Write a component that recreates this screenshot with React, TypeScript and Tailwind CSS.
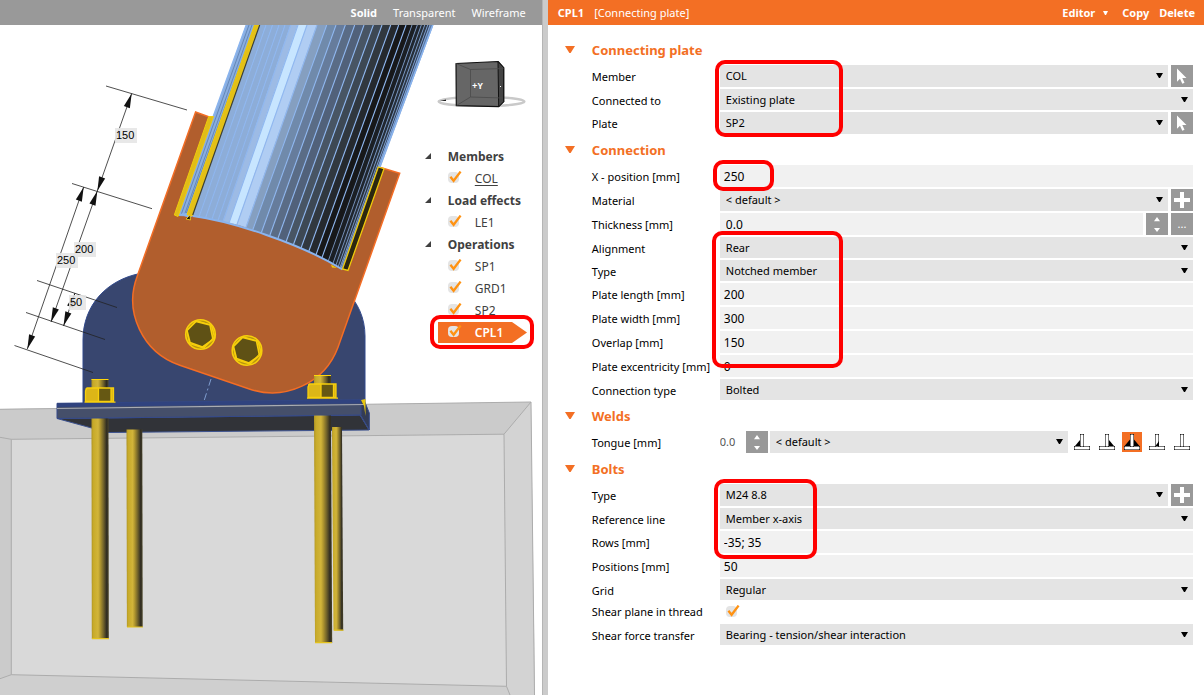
import { useId } from 'react'
import type { ReactNode } from 'react'
import clsx from 'clsx'

/* ---------- small shared pieces ---------- */

function Caret({ className }: { className?: string }) {
  return (
    <svg viewBox="0 0 7 5" className={clsx('h-[5px] w-[7px]', className)} fill="currentColor" aria-hidden="true">
      <path d="M0 0h7L4 5H3z" />
    </svg>
  )
}

function Highlight({ className }: { className: string }) {
  return <div className={clsx('pointer-events-none absolute z-10 rounded-[10px] border-4 border-[#ff0000]', className)} />
}

function Tick({ label, id }: { label?: string; id?: string }) {
  return (
    <span className="relative block h-3 w-3.5 shrink-0">
      <input
        id={id}
        type="checkbox"
        defaultChecked
        aria-label={label}
        className="block h-[11px] w-[11px] appearance-none rounded-sm bg-[#e4e4e4]"
      />
      <svg viewBox="0 0 14 12" className="pointer-events-none absolute -top-px left-0 h-3 w-3.5" aria-hidden="true">
        <path d="M2.4 5.8L5.6 9.8 12.6 .6" fill="none" stroke="#ff9212" strokeWidth="2.3" />
      </svg>
    </span>
  )
}

function Select({ id, value, tall }: { id: string; value: string; tall?: boolean }) {
  return (
    <div className="relative min-w-0 flex-1">
      <select
        id={id}
        defaultValue={value}
        className={clsx('block w-full appearance-none bg-[#e4e4e4] pr-5 pl-1.5', tall ? 'h-[22px]' : 'h-[21px]')}
      >
        <option value={value}>{value}</option>
      </select>
      <Caret className="pointer-events-none absolute top-2 right-[5px]" />
    </div>
  )
}

function GreyButton({ label, children }: { label: string; children: ReactNode }) {
  return (
    <button type="button" aria-label={label} className="flex h-[22px] w-[22px] shrink-0 items-center justify-center bg-[#999999] text-white">
      {children}
    </button>
  )
}

function PickButton() {
  return (
    <GreyButton label="Pick in scene">
      <svg viewBox="0 0 22 22" className="h-[22px] w-[22px]" fill="currentColor">
        <path d="M6 3.5v13.2l3-2.9 2.3 5 2.2-1-2.2-4.8h4.2z" />
      </svg>
    </GreyButton>
  )
}

function AddButton() {
  return (
    <GreyButton label="Add">
      <svg viewBox="0 0 22 22" className="h-[22px] w-[22px]" fill="currentColor">
        <path d="M9 3h4v6h6v4h-6v6H9v-6H3V9h6z" />
      </svg>
    </GreyButton>
  )
}

function SpinButton() {
  return (
    <GreyButton label="Step value">
      <svg viewBox="0 0 22 22" className="h-[22px] w-[22px]" fill="currentColor">
        <path d="M8 8.2L11 4l3 4.2zM8 15h6l-3 4z" />
      </svg>
    </GreyButton>
  )
}

/* ---------- property rows ---------- */

function Row({ label, id, children }: { label: string; id: string; children: ReactNode }) {
  return (
    <div className="flex items-center">
      <label htmlFor={id} className="w-32 shrink-0 pt-0.5 whitespace-nowrap">
        {label}
      </label>
      {children}
    </div>
  )
}

function SelectRow({ label, value, action }: { label: string; value: string; action?: ReactNode }) {
  const id = useId()
  return (
    <Row label={label} id={id}>
      <div className="flex min-w-0 flex-1 gap-[3px]">
        <Select id={id} value={value} tall={!!action} />
        {action}
      </div>
    </Row>
  )
}

function InputRow({ label, value, action }: { label: string; value: string; action?: ReactNode }) {
  const id = useId()
  return (
    <Row label={label} id={id}>
      <div className="flex min-w-0 flex-1 gap-[3px]">
        <input
          id={id}
          type="text"
          defaultValue={value}
          className={clsx('h-[22px] min-w-0 flex-1 bg-[#f1f1f1] text-[12px]', action ? 'pl-1.5' : 'pl-1')}
        />
        {action}
      </div>
    </Row>
  )
}

function Section({ title, children }: { title: string; children: ReactNode }) {
  return (
    <section>
      <button type="button" className="flex h-[31px] w-full items-center pl-[17px] text-left text-[13px] font-bold text-[#f36f24]">
        <svg viewBox="0 0 10 7" className="mr-[17px] h-[7px] w-2.5" fill="currentColor" aria-hidden="true">
          <path d="M0 0h10L5.6 7H4.4z" />
        </svg>
        {title}
      </button>
      <div className="flex flex-col gap-0.5 pr-[11px] pl-11">{children}</div>
    </section>
  )
}

/* ---------- weld type icons ---------- */

const WELDS = [
  { name: 'Fillet left', fill: 'M8 8v6H3z' },
  { name: 'Fillet right', fill: 'M12 8v6h5z' },
  { name: 'Fillet both sides', fill: 'M8 7.500v6.500H2.500zM12 7.500v6.500h5.500z' },
  { name: 'Butt', fill: 'M8.500 14L12 9v5z' },
  { name: 'None', fill: '' },
]

function WeldIcon({ fill }: { fill: string }) {
  return (
    <svg viewBox="0 0 20 20" className="h-5 w-5">
      <rect x="2.5" y="14.5" width="15" height="3" fill="#fff" stroke="#777" />
      <rect x="8.5" y="2.5" width="3" height="12" fill="#fff" stroke="#777" />
      <path d={fill} fill="#000" />
      <path d="M2 14h1v1H2zM17 14h1v1h-1zM2 17h1v1H2zM17 17h1v1h-1zM8 2h1v1H8zM11 2h1v1h-1zM8 14h1v1H8zM11 14h1v1h-1z" fill="#222" />
    </svg>
  )
}

/* ---------- 3D scene ---------- */

// facets of the tube: x at the top edge, then the lower end, then shade
const FACETS: [number, number, number, string][] = [
  [259.3, 192.5, 216, '#8dadd8'],
  [266, 199, 217, '#8dadd8'],
  [272.5, 205.5, 218, '#8dadd8'],
  [279, 212, 219, '#8dadd8'],
  [285, 218, 220.5, '#8dadd8'],
  [290.7, 223, 221.5, '#9dbbe5'],
  [298, 229, 223, '#c7e5ff'],
  [307, 237, 224.5, '#b0cdf3'],
  [317, 246, 227.5, '#859fc0'],
  [326.7, 252.7, 230, '#708aab'],
  [336, 261.3, 232.8, '#667c9c'],
  [345.3, 269.7, 235.8, '#5a6c86'],
  [354.7, 277.7, 239, '#51617a'],
  [364, 286, 242, '#485564'],
  [373.3, 293.3, 245, '#3d4854'],
  [382, 301, 248, '#31383f'],
  [390.7, 308.7, 251.5, '#25292e'],
  [398.7, 316, 254.7, '#17181a'],
  [406, 322, 257.5, '#17181a'],
  [412, 328.3, 260.8, '#1b1f24'],
  [417.3, 333, 263.2, '#20262e'],
  [421.3, 336, 265, '#262e38'],
  [424.7, 338.3, 266.3, '#2d3744'],
  [427.7, 340, 267.4, '#34425a'],
  [430, 341, 268, '#5d7ba6'],
  [433, 342.3, 269, '#8ab4ee'],
]

const EXTENSIONS = ['M106 86L187 110', 'M72 183.5L152 208.7', 'M37 280.5L117 307.5', 'M26 312.5L105 339.5', 'M14.5 345.5L93 372.5']
const SPANS = ['M131.7 93.5L97.3 191', 'M83.7 187L27.3 349', 'M97.3 191L51 322', 'M75 293L63.5 326']

const ARROWS = [
  { x: 131.7, y: 93.5, angle: 19.5 },
  { x: 97.3, y: 191, angle: 199.5 },
  { x: 97.3, y: 191, angle: 19.5 },
  { x: 83.7, y: 187, angle: 19.5 },
  { x: 27.3, y: 349, angle: 199.5 },
  { x: 51, y: 322, angle: 199.5 },
  { x: 63.5, y: 326, angle: 199.5 },
  { x: 75, y: 293, angle: 19.5 },
]

const DIMENSIONS = [
  { x: 115, y: 128, w: 22, text: '150' },
  { x: 74, y: 242, w: 22, text: '200' },
  { x: 56, y: 253, w: 22, text: '250' },
  { x: 69, y: 295, w: 17, text: '50' },
]

function AnchorNut({ x, y }: { x: number; y: number }) {
  return (
    <g transform={`translate(${x} ${y})`}>
      <rect x="6" y="0" width="17" height="9" fill="url(#rod)" />
      <path d="M6 .5h17" stroke="#ffd60a" />
      <path d="M0 9h28v14H0z" fill="#dcb617" />
      <path d="M13 9h12.5v14H13z" fill="#665813" />
      <path d="M1.5 9H28v13.5H0V12zM13 9v13M25.5 9v13M-1 23.2h31" fill="none" stroke="#f7cf0c" strokeWidth="1.3" />
    </g>
  )
}

function PlateBolt({ x, y }: { x: number; y: number }) {
  return (
    <g transform={`translate(${x} ${y})`} stroke="#f7cf0c" fill="none">
      <circle r="14.8" fill="#b8960f" strokeWidth="1.6" />
      <path d="M-13.5 -4L-4 -13.8 11 -9 14 3 3 13.5 -11 9z" strokeWidth="1.2" />
      <path d="M-4.5 -13L9.5 -9.5 12.5 5 2 12.5 -10.5 8 -13.5 -4z" fill="#5f5115" strokeWidth="1.6" />
      <path d="M12 -7.5l2 9L3 13.8" />
    </g>
  )
}

function Scene() {
  return (
    <svg viewBox="0 25 542 670" preserveAspectRatio="xMinYMin slice" className="absolute inset-0 h-full w-full" role="img" aria-label="Connection model">
      <defs>
        <linearGradient id="rod">
          <stop offset="0" stopColor="#b09524" />
          <stop offset=".12" stopColor="#c8ab2a" />
          <stop offset=".38" stopColor="#d2b53a" />
          <stop offset=".5" stopColor="#b2982f" />
          <stop offset=".7" stopColor="#6f612a" />
          <stop offset=".88" stopColor="#2e2b22" />
          <stop offset="1" stopColor="#4d4729" />
        </linearGradient>
      </defs>

      {/* concrete block */}
      <path d="M0 409L531 402 534.500 695H0z" fill="#cbcbcb" />
      <path d="M504 434L531 402 535 695H510L506.500 686z" fill="#d3d3d3" />
      <path d="M0 678L11.300 674.700 506.500 686 510 695H0z" fill="#cfcfcf" />
      <path d="M11.300 439.300L504 434.200 506.500 686.300 11.300 674.700z" fill="#d9d9d9" />
      <g fill="none" stroke="#acacac">
        <path d="M0 409.300L531 402 534.500 695M531 402L504 434.200" />
        <path d="M0 437.300L11.300 439.300 504 434.200 506.500 686.300 11.300 674.700V439.300M0 678.700L11.300 674.700M506.500 686.300L510 695" />
      </g>

      {/* stiffening plate on the base */}
      <path d="M83 404V340C83 305 107 280 140 273.500H300C336 273 365 300 365 336V404z" fill="#38466f" stroke="#31498c" />
      <path d="M211 379L204 401" stroke="#7f9dcf" strokeDasharray="7 3 2 3" />

      {/* base plate */}
      <path d="M57 418.500L108 432.500 369 430 360 415z" fill="#313338" stroke="#3c5290" />
      <path d="M360 399.500L364 400 369.300 413V430L360.500 415z" fill="#333c56" stroke="#34498a" />
      <path d="M57 403.300L361 399.800V415L57 418.500z" fill="#454f6a" stroke="#34498a" />
      <path d="M57 403.300L361 399.700V403.500L57 407z" fill="#30437f" />
      <path d="M57 408.500L365 404.500" stroke="#a9acb3" strokeWidth="1.200" />
      <path d="M361 400l4.500-1v17l-1.500-10z" fill="#e8c60f" />

      {/* anchors */}
      <path d="M332 427h10l1.200 203.500h-9.700z" fill="url(#rod)" />
      <path d="M126.500 429.500h15.800l.4 197.500h-15.800z" fill="url(#rod)" />
      <path d="M91.500 418.500h17l.3 220.500h-17z" fill="url(#rod)" />
      <path d="M314 415.500h17l1.200 227.500h-17.200z" fill="url(#rod)" />
      <path d="M92 638.700h17M127 627h16M315 642.700h17M334 630.200h9.500" stroke="#e3c21c" strokeWidth="1.200" />

      {/* connecting plate */}
      <path
        d="M195.600 112L137.300 275.900A70 69 0 0 0 179.800 365.300L248.600 388.700A70 69 0 0 0 338 347.300L399.700 173.300 378 166.700 300 150z"
        fill="#b15e2d"
        stroke="#f36d25"
        strokeWidth="1.500"
      />

      {/* tube */}
      <path d="M246 25H260L193 216.500 177.500 216z" fill="#8aaee0" />
      <path d="M249 25L181 215M252 25L184 216M255 25L186 214" stroke="#5a7dac" strokeWidth=".8" />
      {FACETS.slice(0, -1).map(([top, x, y, shade], i) => {
        const [nextTop, nextX, nextY] = FACETS[i + 1]
        return <path key={top} d={`M${top} 25H${nextTop}L${nextX} ${nextY}L${x} ${y}z`} fill={shade} stroke={shade} strokeWidth=".4" />
      })}
      {FACETS.slice(1).map(([top, x, y]) => (
        <path key={top} d={`M${top} 25L${x} ${y}`} stroke="#8fb7f0" strokeWidth={top > 410 ? '.7' : '1.1'} />
      ))}
      <path d="M193 216C230 221 300 243 342.500 269.500" fill="none" stroke="#8ab4ee" strokeWidth="2" />
      <path d="M246.300 25L178 214M432.700 25L379 168" stroke="#8ab4ee" strokeWidth="1.500" />
      <path d="M178 214l12 4 3-3-6-2z" fill="#8ab4ee" />

      {/* slots and welds */}
      <path d="M208.700 116.500H213.500L178 216.500 174.300 215z" fill="#e0bd18" stroke="#f0cb0b" />
      <path d="M254.500 25H259L192 216 187 214.500z" fill="#e3c018" stroke="#f0cb0b" />
      <path d="M259.700 25L192.700 215" stroke="#3c3f35" strokeWidth="1.200" />
      <path d="M186 219l4-4 .5 5z" fill="#111" stroke="#e3c018" />
      <path d="M378.300 167L384 168.700 348 270.500 342.500 269z" fill="#2b2710" stroke="#f0cb0b" strokeWidth="1.300" />
      <path d="M331 264.500l6 3.500-5-.5z" fill="#f0cb0b" />

      <PlateBolt x={200.5} y={334.5} />
      <PlateBolt x={247} y={350.5} />
      <AnchorNut x={85.5} y={379} />
      <AnchorNut x={308} y={375} />

      {/* dimension lines */}
      <g fill="none" stroke="#222" strokeWidth=".8">
        {EXTENSIONS.map((d) => (
          <path key={d} d={d} />
        ))}
        {SPANS.map((d) => (
          <path key={d} d={d} />
        ))}
      </g>
      {ARROWS.map((a) => (
        <path key={`${a.x}-${a.angle}`} d="M0 0L3.200 14.500H-3.200z" fill="#111" transform={`translate(${a.x} ${a.y}) rotate(${a.angle})`} />
      ))}
      {DIMENSIONS.map((d) => (
        <g key={d.text}>
          <rect x={d.x} y={d.y} width={d.w} height="15" fill="#e6e6e6" fillOpacity=".9" />
          <text x={d.x + 1} y={d.y + 11} className="font-['Liberation_Sans',sans-serif] text-[11px]">
            {d.text}
          </text>
        </g>
      ))}

      {/* view cube */}
      <ellipse cx="481.500" cy="101.500" rx="43" ry="4.500" fill="none" stroke="#c9c9c9" strokeWidth="2.200" />
      <path d="M440 101l6-1.500v1.500z" fill="#222" />
      <path d="M456 63.500L498 61.500 503.700 67.700V101.700L498.700 106.700 456.300 105.700z" fill="#666" stroke="#111" strokeWidth="1.200" strokeLinejoin="round" />
      <path d="M498 61.500L503.700 67.700V101.700L498.700 106.700z" fill="#444" stroke="#111" />
      <path d="M456 63.500L470.500 69.500 503.500 68.500M470.500 69.500V97L456.500 105.500M470.500 97L503 98" fill="none" stroke="#4a4a4a" strokeWidth=".8" />
      <rect x="500" y="86" width="1" height="1" fill="#fff" />
      <text x="472" y="89" fill="#fff" className="font-['Liberation_Mono',monospace] text-[9px] font-bold">
        +Y
      </text>
    </svg>
  )
}

/* ---------- model tree ---------- */

const TREE = [
  { title: 'Members', items: ['COL'] },
  { title: 'Load effects', items: ['LE1'] },
  { title: 'Operations', items: ['SP1', 'GRD1', 'SP2', 'CPL1'] },
]

function Tree() {
  return (
    <nav className="absolute top-[120px] right-2 w-[109px] text-[12px] text-[#404040]">
      {TREE.map((group) => (
        <div key={group.title}>
          <button type="button" className="flex h-[22px] items-center font-bold whitespace-nowrap">
            <svg viewBox="0 0 6 6" className="mr-[17px] h-1.5 w-1.5" fill="currentColor" aria-hidden="true">
              <path d="M6 0v6H0z" />
            </svg>
            <span className="pt-0.5">{group.title}</span>
          </button>
          {group.items.map((item) => {
            const selected = item === 'CPL1'
            return (
              <div key={item} className="relative flex h-[22px] items-center pl-[13px]">
                {selected && (
                  <svg viewBox="0 0 90 21" className="absolute left-[13px] h-[21px] w-[90px]" aria-hidden="true">
                    <path d="M0 0H74L89 10.500 74 21H0z" fill="#f36f24" />
                  </svg>
                )}
                <div className="relative flex items-center gap-[13px] pl-2.5">
                  <Tick label={item} />
                  <a
                    href={`#${item}`}
                    className={clsx('pt-0.5', item === 'COL' && 'underline underline-offset-2', selected && 'font-semibold text-white')}
                  >
                    {item}
                  </a>
                </div>
                {selected && <Highlight className="right-0 -top-1.5 -bottom-1.5 left-[5px]" />}
              </div>
            )
          })}
        </div>
      ))}
    </nav>
  )
}

/* ---------- property panel ---------- */

function Properties() {
  const tongueId = useId()
  const shearId = useId()

  return (
    <div className="min-w-0 flex-1 bg-white">
      <header className="flex h-[25px] items-center bg-[#f36f24] pr-[9px] pl-2.5 text-white">
        <h1 className="font-bold">CPL1</h1>
        <span className="ml-2.5">[Connecting plate]</span>
        <div className="ml-auto flex items-center font-bold">
          <button type="button" className="flex items-center gap-2">
            Editor
            <svg viewBox="0 0 5 4" className="h-1 w-[5px]" fill="currentColor" aria-hidden="true">
              <path d="M0 0h5L3 4H2z" />
            </svg>
          </button>
          <button type="button" className="ml-3.5">Copy</button>
          <button type="button" className="ml-2.5">Delete</button>
        </div>
      </header>

      <div className="pt-[9px]">
        <Section title="Connecting plate">
          <div className="relative flex flex-col gap-0.5">
            <SelectRow label="Member" value="COL" action={<PickButton />} />
            <SelectRow label="Connected to" value="Existing plate" />
            <SelectRow label="Plate" value="SP2" action={<PickButton />} />
            <Highlight className="-top-[5px] -bottom-[3px] left-[123px] w-32" />
          </div>
        </Section>

        <Section title="Connection">
          <div className="relative">
            <InputRow label="X - position [mm]" value="250" />
            <Highlight className="-top-[5px] -bottom-1 left-[121px] w-[61px]" />
          </div>
          <SelectRow label="Material" value="< default >" action={<AddButton />} />
          <InputRow
            label="Thickness [mm]"
            value="0.0"
            action={
              <>
                <SpinButton />
                <GreyButton label="More">...</GreyButton>
              </>
            }
          />
          <div className="relative flex flex-col gap-0.5">
            <SelectRow label="Alignment" value="Rear" />
            <SelectRow label="Type" value="Notched member" />
            <InputRow label="Plate length [mm]" value="200" />
            <InputRow label="Plate width [mm]" value="300" />
            <InputRow label="Overlap [mm]" value="150" />
            <Highlight className="-top-1.5 -bottom-[15px] left-[120px] w-[131px]" />
          </div>
          <InputRow label="Plate excentricity [mm]" value="0" />
          <SelectRow label="Connection type" value="Bolted" />
        </Section>

        <Section title="Welds">
          <Row label="Tongue [mm]" id={tongueId}>
            <input type="text" aria-label="Weld size" defaultValue="0.0" className="mr-[3px] w-[23px] text-[#555]" />
            <SpinButton />
            <div className="ml-0.5 flex min-w-0 flex-1">
              <Select id={tongueId} value="< default >" tall />
            </div>
            <div className="mr-px ml-1 flex gap-[5px]">
              {WELDS.map((weld) => (
                <button
                  key={weld.name}
                  type="button"
                  aria-label={weld.name}
                  className={clsx('h-5 w-5', weld.name === 'Fillet both sides' && 'bg-[#f36f24]')}
                >
                  <WeldIcon fill={weld.fill} />
                </button>
              ))}
            </div>
          </Row>
        </Section>

        <Section title="Bolts">
          <div className="relative flex flex-col gap-0.5">
            <SelectRow label="Type" value="M24 8.8" action={<AddButton />} />
            <SelectRow label="Reference line" value="Member x-axis" />
            <InputRow label="Rows [mm]" value="-35; 35" />
            <Highlight className="-top-[5px] -bottom-1.5 left-[122px] w-[103px]" />
          </div>
          <InputRow label="Positions [mm]" value="50" />
          <SelectRow label="Grid" value="Regular" />
          <div className="flex h-5 items-center">
            <label htmlFor={shearId} className="w-32 shrink-0 whitespace-nowrap">
              Shear plane in thread
            </label>
            <div className="pl-1.5">
              <Tick id={shearId} />
            </div>
          </div>
          <SelectRow label="Shear force transfer" value="Bearing - tension/shear interaction" />
        </Section>
      </div>
    </div>
  )
}

export default function App() {
  return (
    <main className="flex min-h-screen bg-white font-['Noto_Sans','Open_Sans',sans-serif] text-[11px] leading-[18px] text-black">
      <div className="flex w-[45%] shrink-0 flex-col">
        <div className="flex h-[25px] items-center justify-end gap-4 bg-[#999999] pr-4 text-white">
          <button type="button" className="font-bold">Solid</button>
          <button type="button">Transparent</button>
          <button type="button">Wireframe</button>
        </div>
        <div className="relative flex-1 overflow-hidden">
          <Scene />
          <Tree />
        </div>
      </div>
      <div className="w-1.5 shrink-0 border-l border-[#b5b5b5] bg-[#cbcbcb]" />
      <Properties />
    </main>
  )
}
